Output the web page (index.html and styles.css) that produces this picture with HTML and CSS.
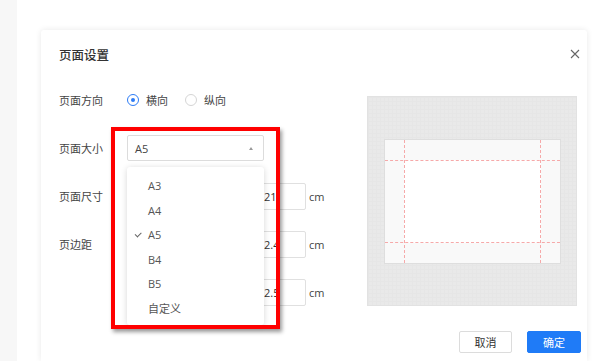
FILE: index.html
```html
<!DOCTYPE html>
<html lang="zh-CN">
<head>
    <meta charset="UTF-8">
    <meta name="viewport" content="width=device-width, initial-scale=1.0">
    <title>页面设置</title>
    <link rel="stylesheet" href="styles.css">
</head>
<body>
    <div class="side"></div>
    <div class="main">
        <div class="dialog">
            <div class="dialog-header">
                <h1>页面设置</h1>
                <svg class="close" width="10" height="10" viewBox="0 0 10 10">
                    <path d="M1 1 L9 9 M9 1 L1 9" stroke="#666" stroke-width="1.1" fill="none"/>
                </svg>
            </div>

            <div class="dialog-body">
                <div class="form">
                    <div class="row">
                        <span class="label">页面方向</span>
                        <label class="radio checked"><span class="dot"></span>横向</label>
                        <label class="radio"><span class="dot"></span>纵向</label>
                    </div>
                    <div class="row">
                        <span class="label">页面大小</span>
                        <div class="select-wrap">
                            <div class="select">A5<span class="caret"></span></div>
                            <ul class="dropdown">
                                <li>A3</li>
                                <li>A4</li>
                                <li class="selected">A5</li>
                                <li>B4</li>
                                <li>B5</li>
                                <li>自定义</li>
                            </ul>
                            <div class="highlight"></div>
                        </div>
                    </div>
                    <div class="row">
                        <span class="label">页面尺寸</span>
                        <input class="field" type="text" value="21">
                        <span class="unit">cm</span>
                    </div>
                    <div class="row">
                        <span class="label">页边距</span>
                        <input class="field" type="text" value="2.4">
                        <span class="unit">cm</span>
                    </div>
                    <div class="row">
                        <span class="label"></span>
                        <input class="field" type="text" value="2.5">
                        <span class="unit">cm</span>
                    </div>
                </div>

                <div class="preview">
                    <div class="paper">
                        <div class="printable"></div>
                        <span class="guide v left"></span>
                        <span class="guide v right"></span>
                        <span class="guide h top"></span>
                        <span class="guide h bottom"></span>
                    </div>
                </div>
            </div>

            <div class="dialog-footer">
                <button class="btn">取消</button>
                <button class="btn primary">确定</button>
            </div>
        </div>
    </div>
</body>
</html>
```

FILE: styles.css
```css
body {
    margin: 0;
    width: 595px;
    height: 361px;
    overflow: hidden;
    display: flex;
    background: #fff;
    font-family: "Open Sans", "Noto Sans CJK SC", sans-serif;
    font-size: 11px;
    color: #333;
}
.side {
    width: 17px;
    background: #f7f7f7;
}
.main {
    flex: 1;
    padding: 30px 8px 0 24px;
}
.dialog {
    height: 331px;
    background: #fff;
    border-radius: 3px 3px 0 0;
    box-shadow: 0 0 6px rgba(0, 0, 0, 0.09);
}
.dialog-header {
    height: 48px;
    display: flex;
    align-items: center;
    justify-content: space-between;
    padding: 0 7px 0 18px;
}
.dialog-header h1 {
    margin: 0;
    font-size: 12.5px;
    font-weight: 500;
    color: #333;
}
.dialog-body {
    display: flex;
    padding: 9px 10px 0 18px;
}
.form {
    flex: 1;
}
.row {
    display: flex;
    align-items: center;
    height: 26px;
    margin-bottom: 22px;
}
.row:last-child {
    margin-bottom: 0;
}
.label {
    width: 68px;
    color: #444;
}
.radio {
    display: flex;
    align-items: center;
    margin-right: 17px;
    color: #444;
}
.radio .dot {
    width: 10px;
    height: 10px;
    border: 1px solid #d5d5d5;
    border-radius: 50%;
    margin-right: 7px;
    box-sizing: content-box;
    position: relative;
}
.radio.checked .dot {
    border-color: #2d7cf6;
}
.radio.checked .dot::after {
    content: "";
    position: absolute;
    left: 3px;
    top: 3px;
    width: 4px;
    height: 4px;
    border-radius: 50%;
    background: #2d7cf6;
}
.select-wrap {
    position: relative;
    width: 137px;
    height: 26px;
}
.select {
    height: 26px;
    box-sizing: border-box;
    border: 1px solid #dcdcdc;
    border-radius: 2px;
    padding-left: 7px;
    display: flex;
    align-items: center;
    justify-content: space-between;
    color: #444;
}
.caret {
    width: 0;
    height: 0;
    margin-right: 10px;
    border-left: 2.5px solid transparent;
    border-right: 2.5px solid transparent;
    border-bottom: 3px solid #999;
}
.dropdown {
    position: absolute;
    z-index: 2;
    left: 0;
    top: 32px;
    width: 137px;
    margin: 0;
    padding: 7px 0 4px;
    list-style: none;
    background: #fff;
    border-radius: 3px;
    box-shadow: 0 1px 6px rgba(0, 0, 0, 0.16);
}
.dropdown li {
    height: 24.5px;
    line-height: 24.5px;
    padding-left: 21px;
    color: #555;
    position: relative;
}
.dropdown li.selected::before {
    content: "";
    position: absolute;
    left: 8px;
    top: 9px;
    width: 5px;
    height: 2.5px;
    border-left: 1px solid #666;
    border-bottom: 1px solid #666;
    transform: rotate(-45deg);
}
.highlight {
    position: absolute;
    z-index: 3;
    left: -16px;
    top: -8px;
    width: 169px;
    height: 202px;
    box-sizing: border-box;
    border: 4px solid #ff0000;
    box-shadow: 2px 3px 4px rgba(0, 0, 0, 0.4);
}
.field {
    width: 50px;
    height: 27px;
    margin-left: 129px;
    box-sizing: border-box;
    border: 1px solid #e0e0e0;
    border-radius: 2px;
    padding: 0 7px;
    font: inherit;
    color: #333;
}
.unit {
    margin-left: 3px;
    color: #444;
}
.preview {
    width: 210px;
    height: 210px;
    margin-top: 9px;
    box-sizing: border-box;
    border: 1px solid #e2e2e2;
    background-color: #e9e9e9;
    background-image:
        linear-gradient(#e6e6e6 1px, transparent 1px),
        linear-gradient(90deg, #e6e6e6 1px, transparent 1px);
    background-size: 4px 4px;
    display: flex;
    align-items: center;
    justify-content: center;
}
.paper {
    position: relative;
    width: 177px;
    height: 125px;
    box-sizing: border-box;
    border: 1px solid #dedede;
    background: #f9f9f9;
    padding: 20px 19px;
}
.printable {
    height: 100%;
    background: #fff;
}
.guide {
    position: absolute;
}
.guide.v {
    top: 0;
    bottom: 0;
    border-left: 1px dashed #f6a9a9;
}
.guide.h {
    left: 0;
    right: 0;
    border-top: 1px dashed #f6a9a9;
}
.guide.left { left: 19px; }
.guide.right { right: 19px; }
.guide.top { top: 20px; }
.guide.bottom { bottom: 20px; }
.dialog-footer {
    display: flex;
    justify-content: flex-end;
    gap: 15px;
    padding: 25px 6px 0 0;
}
.btn {
    width: 53px;
    height: 22px;
    padding: 0;
    border: 1px solid #dcdcdc;
    border-radius: 2px;
    background: #fff;
    font: inherit;
    color: #333;
}
.btn.primary {
    width: 54px;
    border-color: #1f7bf7;
    background: #1f7bf7;
    color: #fff;
}
```
